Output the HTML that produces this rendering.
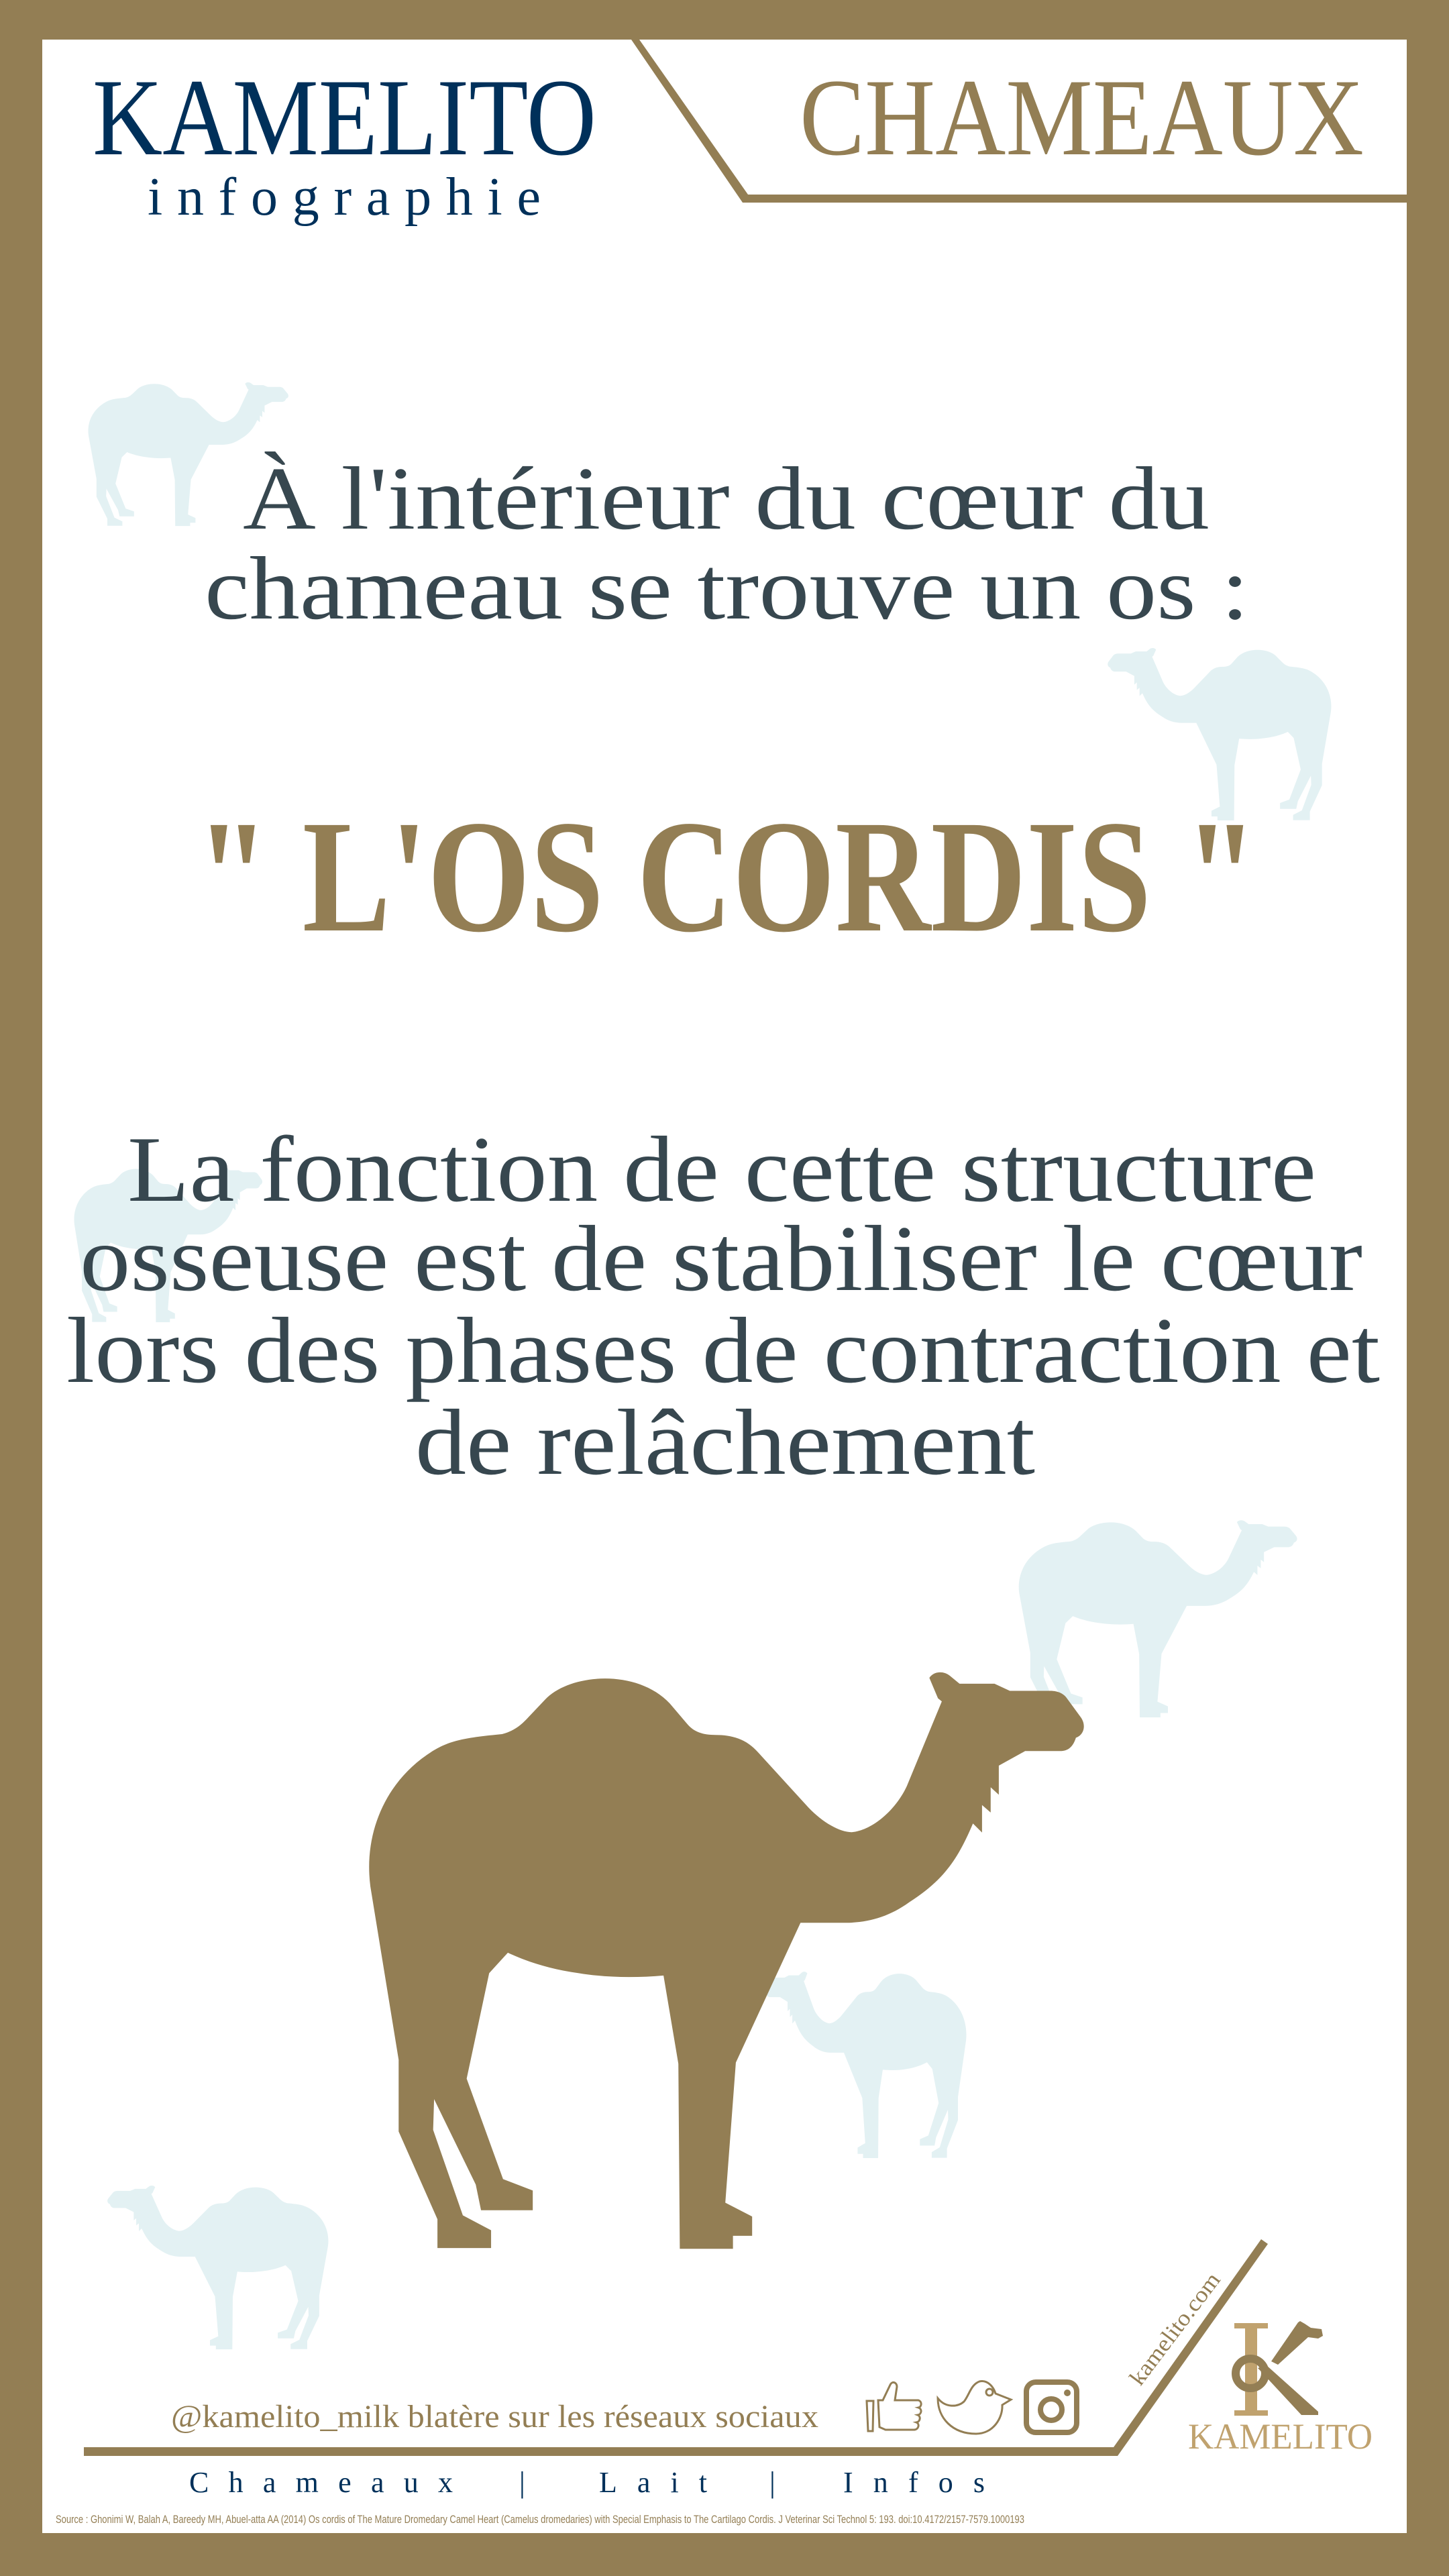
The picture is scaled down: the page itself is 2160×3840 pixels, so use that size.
<!DOCTYPE html>
<html><head><meta charset="utf-8">
<style>
html,body{margin:0;padding:0;background:#937e54;}
svg{display:block;}
</style></head>
<body>
<svg width="2160" height="3840" viewBox="0 0 2160 3840" xmlns="http://www.w3.org/2000/svg">
<defs>
<path id="c" d="M45,600 C30,460 80,330 170,260 C210,228 245,222 320,213 C345,205 360,190 375,170 L410,125 C460,60 600,45 670,135 L705,185 C720,208 740,215 765,215 C800,215 830,225 855,260 L960,400 C990,438 1025,462 1050,462 C1090,458 1140,410 1165,345 L1238,130 L1230,122 L1212,70 C1220,55 1240,50 1255,65 L1275,85 L1348,85 L1380,103 L1465,103 C1480,103 1492,110 1498,120 L1528,170 C1540,190 1535,215 1518,222 C1512,245 1502,256 1485,256 L1412,256 L1357,293 L1357,367 L1340,348 L1340,412 L1322,393 L1322,463 L1303,440 C1270,535 1240,585 1170,640 C1130,675 1090,690 1045,692 L943,692 L808,1047 L786,1403 L842,1438 L842,1487 L802,1487 L802,1520 L691,1520 L688,1050 L657,826 C600,832 540,832 480,820 C420,810 370,790 332,768 L293,820 L246,1088 L322,1343 L384,1372 L384,1422 L276,1422 L265,1357 L178,1140 L176,1218 L238,1435 L297,1473 L297,1518 L185,1518 L185,1445 L104,1222 L104,1040 Z"/>
</defs>
<rect x="0" y="0" width="2160" height="3840" fill="#937e54"/>
<rect x="63" y="59" width="2034" height="3717" fill="#ffffff"/>

<!-- background camels -->
<g fill="#e3f1f3">
<use href="#c" transform="translate(123,561.7) scale(0.2,0.1463)"/>
<use href="#c" transform="translate(1993.9,956.2) scale(-0.2233,0.1755)"/>
<use href="#c" transform="translate(102.5,1731.1) scale(0.188,0.1578)"/>
<use href="#c" transform="translate(1506.9,2255) scale(0.278,0.2007)"/>
<use href="#c" transform="translate(1449.1,2928.5) scale(-0.2027,0.1898)"/>
<use href="#c" transform="translate(498.8,3248.7) scale(-0.2207,0.1667)"/>
</g>

<!-- header lines -->
<polygon points="941,59 953,59 1115,290 2097,290 2097,302 1107,302" fill="#937e54"/>

<g font-family="'Liberation Serif', serif">
<text x="138" y="230" font-size="164" fill="#00305a" textLength="751" lengthAdjust="spacingAndGlyphs">KAMELITO</text>
<text x="220" y="320" font-size="80" fill="#00305a" textLength="586" lengthAdjust="spacing">infographie</text>
<text x="1192" y="230" font-size="164" fill="#937e54" textLength="841" lengthAdjust="spacingAndGlyphs">CHAMEAUX</text>

<g fill="#37474f" font-size="134">
<text x="362" y="788" textLength="1441" lengthAdjust="spacingAndGlyphs">À l'intérieur du cœur du</text>
<text x="305" y="922" textLength="1557" lengthAdjust="spacingAndGlyphs">chameau se trouve un os :</text>
</g>
<text x="292" y="1387" font-size="240" font-weight="bold" fill="#937e54" textLength="1583" lengthAdjust="spacingAndGlyphs">" L'OS CORDIS "</text>
<g fill="#37474f" font-size="140">
<text x="190" y="1790" textLength="1772" lengthAdjust="spacingAndGlyphs">La fonction de cette structure</text>
<text x="119" y="1923" textLength="1912" lengthAdjust="spacingAndGlyphs">osseuse est de stabiliser le cœur</text>
<text x="99" y="2060" textLength="1958" lengthAdjust="spacingAndGlyphs">lors des phases de contraction et</text>
<text x="619" y="2197" textLength="924" lengthAdjust="spacingAndGlyphs">de relâchement</text>
</g>
</g>

<!-- big camel -->
<use href="#c" fill="#937e54" transform="translate(520,2460) scale(0.714,0.587)"/>

<!-- footer line -->
<polygon points="125,3648 1660,3648 1880,3338 1890,3345 1666,3661 125,3661" fill="#937e54"/>

<g font-family="'Liberation Serif', serif">
<text x="255" y="3618" font-size="48" fill="#937e54" textLength="965" lengthAdjust="spacingAndGlyphs">@kamelito_milk blatère sur les réseaux sociaux</text>
<text transform="translate(1700,3558) rotate(-53)" font-size="34" fill="#937e54" textLength="200" lengthAdjust="spacingAndGlyphs">kamelito.com</text>
<text x="1771" y="3650" font-size="54" fill="#c0a26e" textLength="275" lengthAdjust="spacingAndGlyphs">KAMELITO</text>
<g fill="#00305a" font-size="44">
<text x="282" y="3715" textLength="393" lengthAdjust="spacing">Chameaux</text>
<text x="774" y="3715">|</text>
<text x="893" y="3715" textLength="161" lengthAdjust="spacing">Lait</text>
<text x="1147" y="3715">|</text>
<text x="1257" y="3715" textLength="211" lengthAdjust="spacing">Infos</text>
</g>
</g>
<text x="83" y="3761" font-family="'Liberation Sans', sans-serif" font-size="17" fill="#937e54" textLength="1444" lengthAdjust="spacingAndGlyphs">Source : Ghonimi W, Balah A, Bareedy MH, Abuel-atta AA (2014) Os cordis of The Mature Dromedary Camel Heart (Camelus dromedaries) with Special Emphasis to The Cartilago Cordis. J Veterinar Sci Technol 5: 193. doi:10.4172/2157-7579.1000193</text>

<!-- icons -->
<g fill="none" stroke="#937e54" stroke-width="3">
<path d="M1292,3579 L1302,3579 L1301,3624 L1294,3624 Z"/>
<path d="M1309,3578 L1316,3578 L1327,3555 C1330,3549 1337,3551 1337,3558 L1334,3578 L1369,3578 C1375,3580 1374,3588 1369,3589 C1375,3591 1374,3599 1368,3600 C1373,3602 1372,3610 1366,3611 C1371,3613 1370,3621 1363,3622 L1320,3622 L1311,3618 Z"/>
<path d="M1398,3575 C1410,3590 1428,3588 1437,3580 C1445,3570 1447,3555 1460,3550 C1472,3547 1481,3558 1484,3568 L1507,3577 L1494,3585 C1495,3605 1480,3628 1455,3628 C1420,3628 1398,3605 1398,3575 Z"/>
<circle cx="1475" cy="3566" r="5"/>
</g>
<rect x="1530" y="3551" width="75" height="75" rx="14" fill="none" stroke="#937e54" stroke-width="8"/>
<circle cx="1567" cy="3592" r="16" fill="none" stroke="#937e54" stroke-width="8"/>
<circle cx="1591" cy="3567" r="5" fill="#937e54"/>

<!-- K logo -->
<g fill="#c0a26e">
<rect x="1856" y="3466" width="18" height="132"/>
<rect x="1840" y="3463" width="50" height="8"/>
<rect x="1840" y="3593" width="50" height="8"/>
</g>
<g fill="#937e54">
<circle cx="1864" cy="3538" r="22" fill="none" stroke="#937e54" stroke-width="12"/>
<polygon points="1895,3520 1935,3462 1938,3460 1945,3464 1954,3470 1970,3472 1972,3482 1965,3486 1950,3484 1905,3525"/>
<polygon points="1875,3530 1888,3526 1965,3595 1965,3600 1940,3600"/>
</g>
</svg>
</body></html>
